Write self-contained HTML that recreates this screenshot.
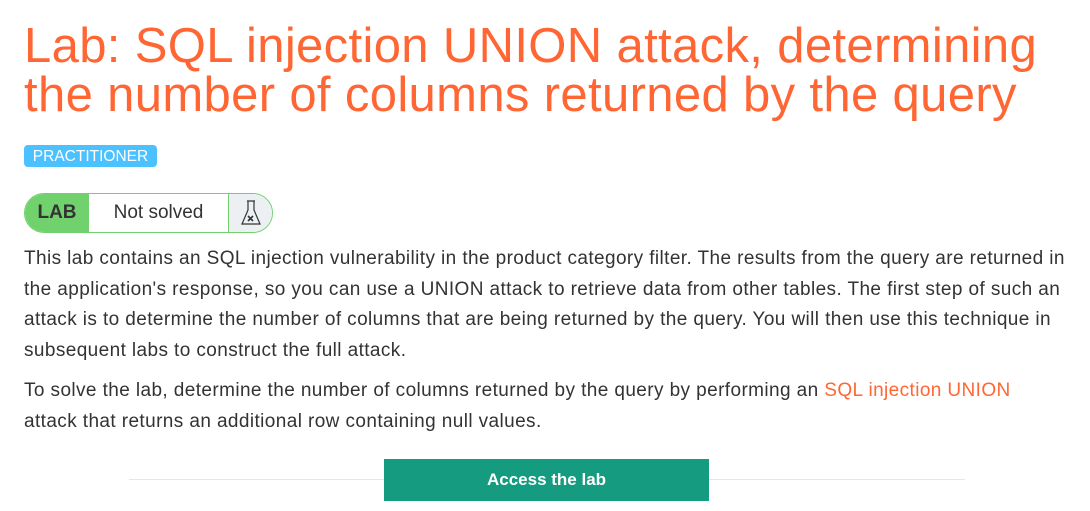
<!DOCTYPE html>
<html><head><meta charset="utf-8"><style>
body{margin:0;background:#fff;font-family:"Liberation Sans",Arial,sans-serif;width:1090px;height:511px;overflow:hidden;position:relative}
h1{position:absolute;left:24px;top:22px;margin:0;font-weight:normal;color:#ff6633;font-size:49px;letter-spacing:0.35px;line-height:49px;width:1060px}
.badge{position:absolute;left:24px;top:145px;width:133px;height:22px;background:#4cc1ff;color:#fff;border-radius:4px;font-size:15.5px;line-height:23px;text-align:center}
.lab{position:absolute;left:24px;top:193px;width:247px;height:38px;border:1px solid #70d16d;border-radius:20px;overflow:hidden;display:flex}
.lab .l{width:64px;background:#70d16d;font-weight:bold;font-size:19px;color:#333;line-height:38px;text-align:center}
.lab .m{width:139px;border-right:1px solid #70d16d;font-size:19px;color:#333;line-height:38px;text-align:center}
.lab .r{flex:1;background:#ecf0f3;display:flex;align-items:center;justify-content:center}
p{position:absolute;left:24px;margin:0;width:1060px;font-size:19px;letter-spacing:0.4px;line-height:30.5px;color:#333}
a{color:#ff6633;text-decoration:none}
.line{position:absolute;left:129px;top:479px;width:836px;height:1px;background:#e6e6e6}
.btn{position:absolute;left:384px;top:459px;width:325px;height:42px;background:#159b80;color:#fff;font-weight:bold;font-size:17px;line-height:42px;text-align:center}
</style></head><body>
<h1>Lab: SQL injection UNION attack, determining the number of columns returned by the query</h1>
<div class="badge">PRACTITIONER</div>
<div class="lab"><div class="l">LAB</div><div class="m">Not solved</div><div class="r">
<svg width="22" height="28" viewBox="0 0 22 28" fill="none" stroke="#333" stroke-width="1.2"><path d="M7 2h8M8 2v9L2 25h18L14 11V2"/><path d="M8 17l5 5M13 17l-5 5" stroke-width="1.6"/></svg>
</div></div>
<p style="top:244px">This lab contains an SQL injection vulnerability in the product category filter. The results from the query are returned in the application's response, so you can use a UNION attack to retrieve data from other tables. The first step of such an attack is to determine the number of columns that are being returned by the query. You will then use this technique in subsequent labs to construct the full attack.</p>
<p style="top:376px">To solve the lab, determine the number of columns returned by the query by performing an <a>SQL injection UNION</a><br>attack that returns an additional row containing null values.</p>
<div class="line"></div>
<div class="btn">Access the lab</div>
</body></html>
